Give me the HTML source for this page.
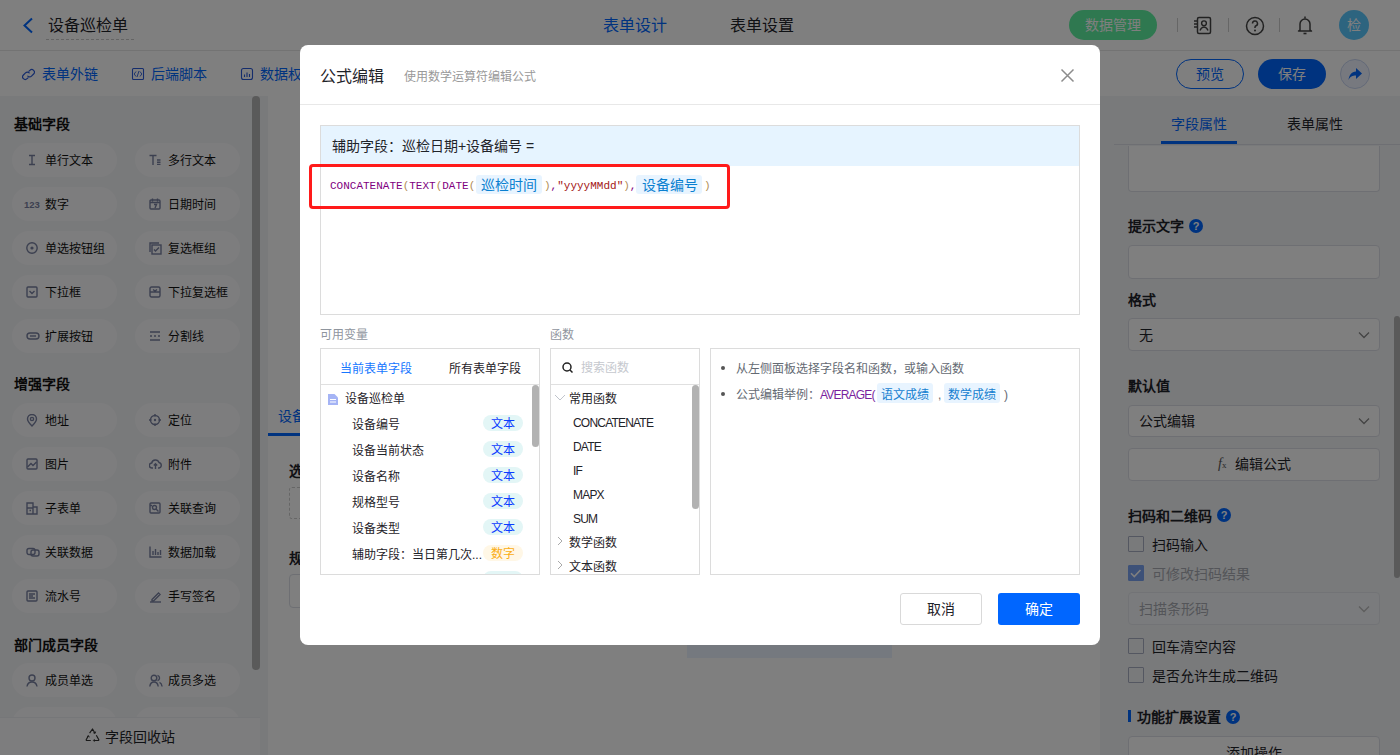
<!DOCTYPE html>
<html lang="zh-CN"><head><meta charset="utf-8">
<style>
*{box-sizing:border-box;margin:0;padding:0}
html,body{width:1400px;height:755px;overflow:hidden;background:#fff;font-family:"Liberation Sans",sans-serif;color:#1f2329}
.a{position:absolute}
.t{position:absolute;white-space:nowrap;line-height:1}
#hdr{left:0;top:0;width:1400px;height:51px;background:#fff;border-bottom:1px solid #e6e6e6}
#tb{left:0;top:51px;width:1400px;height:45px;background:#fff}
#lp{left:0;top:96px;width:268px;height:659px;background:#f3f4f7}
.pill{position:absolute;width:105px;height:34px;border-radius:17px;background:#fbfbfd}
.pill span{position:absolute;left:33px;top:12px;font-size:12px;line-height:12px;color:#111;white-space:nowrap}
.pill svg{position:absolute;left:14px;top:11px}
.pill svg path,.pill svg rect,.pill svg circle{stroke-width:1.4}
.sec{position:absolute;left:14px;font-size:14px;font-weight:bold;color:#111;line-height:14px;white-space:nowrap}
#rp{left:1100px;top:96px;width:300px;height:659px;background:#f3f4f7}
.rl{position:absolute;left:28px;font-size:14px;font-weight:bold;color:#1f2329;line-height:14px;white-space:nowrap}
.inp{position:absolute;left:28px;width:252px;background:#fff;border:1px solid #dcdfe6;border-radius:4px}
.qm{position:absolute;width:14px;height:14px;border-radius:7px;background:#0066ff;color:#fff;font-size:11px;font-weight:bold;line-height:14px;text-align:center}
.cb{position:absolute;left:28px;width:16px;height:16px;border:1px solid #a9aec2;border-radius:1px;background:transparent}
.ct{position:absolute;left:52px;margin-top:-1px;font-size:14px;line-height:14px;color:#1f2329;white-space:nowrap}
.chev{position:absolute}
#ov{left:0;top:0;width:1400px;height:755px;background:rgba(0,0,0,.5)}
#md{left:300px;top:45px;width:800px;height:600px;background:#fff;border-radius:8px}
.mono{font-family:"Liberation Mono",monospace}
.tag{display:inline-block;background:#e8f4ff;color:#1677ff;border-radius:3px}
.vr{position:absolute;left:31px;font-size:12px;line-height:12px;color:#1f2329;white-space:nowrap}
.vt{position:absolute;left:162px;width:40px;height:16px;border-radius:8px;background:#e3f6f6;color:#0a3cff;font-size:12px;line-height:19px;text-align:center}
.fr{position:absolute;left:22px;font-size:12px;line-height:12px;letter-spacing:-0.8px;color:#1f2329;white-space:nowrap}
</style></head><body>
<!-- HEADER -->
<div id="hdr" class="a">
  <svg class="a" style="left:22px;top:17px" width="12" height="17" viewBox="0 0 12 17"><path d="M10 1.5L2.5 8.5L10 15.5" fill="none" stroke="#0066ff" stroke-width="2"/></svg>
  <div class="t" style="left:48px;top:18px;font-size:16px;color:#1f2329">设备巡检单</div>
  <div class="a" style="left:46px;top:39px;width:88px;border-top:1px dashed #c8c8c8"></div>
  <div class="t" style="left:603px;top:18px;font-size:16px;color:#0066ff">表单设计</div>
  <div class="t" style="left:730px;top:18px;font-size:16px;color:#1f2329">表单设置</div>
  <div class="a" style="left:1069px;top:10px;width:88px;height:30px;border-radius:15px;background:#5ef0a0"></div>
  <div class="t" style="left:1085px;top:18px;font-size:14px;color:#fff">数据管理</div>
  <div class="a" style="left:1177px;top:18px;width:1px;height:14px;background:#ccc"></div>
  <div class="a" style="left:1228px;top:18px;width:1px;height:14px;background:#ccc"></div>
  <div class="a" style="left:1279px;top:18px;width:1px;height:14px;background:#ccc"></div>
  <svg class="a" style="left:1193px;top:16px" width="20" height="20" viewBox="0 0 20 20"><rect x="4.5" y="1.5" width="13" height="16" rx="1.5" fill="none" stroke="#444" stroke-width="1.5"/><circle cx="11" cy="7.3" r="2.4" fill="none" stroke="#444" stroke-width="1.4"/><path d="M7 14.5c.8-2.4 2.2-3.4 4-3.4s3.2 1 4 3.4" fill="none" stroke="#444" stroke-width="1.4"/><path d="M1 5h3M1 8h3M1 11h3" stroke="#444" stroke-width="1.3"/></svg>
  <svg class="a" style="left:1245px;top:16px" width="20" height="20" viewBox="0 0 20 20"><circle cx="10" cy="10" r="8.5" fill="none" stroke="#444" stroke-width="1.5"/><path d="M7.5 7.5a2.5 2.5 0 1 1 3.5 2.3c-.7.3-1 .8-1 1.5v.8" fill="none" stroke="#444" stroke-width="1.5"/><circle cx="10" cy="14.5" r="1" fill="#444"/></svg>
  <svg class="a" style="left:1297px;top:15px" width="16" height="20" viewBox="0 0 16 20"><path d="M3 15V9a5 5 0 0 1 10 0v6l1.5 1H1.5z" fill="none" stroke="#444" stroke-width="1.5" stroke-linejoin="round"/><path d="M6.5 18.5h3" stroke="#444" stroke-width="1.6"/><path d="M8 1.5v2" stroke="#444" stroke-width="1.5"/></svg>
  <div class="a" style="left:1339px;top:10px;width:30px;height:30px;border-radius:15px;background:#5ac8ff"></div>
  <div class="t" style="left:1347px;top:18px;font-size:14px;color:#fff">检</div>
</div>
<!-- TOOLBAR -->
<div id="tb" class="a">
  <svg class="a" style="left:22px;top:17px" width="13" height="13" viewBox="0 0 13 13"><path d="M7 3.2l.9-.9a2.6 2.6 0 0 1 3.7 3.7L9.5 8.1a2.6 2.6 0 0 1-3.7 0M6 9.8l-.9.9a2.6 2.6 0 0 1-3.7-3.7L3.5 4.9a2.6 2.6 0 0 1 3.7 0" fill="none" stroke="#2a5ad8" stroke-width="1.2" stroke-linecap="round"/></svg>
  <div class="t" style="left:42px;top:16px;font-size:14px;color:#0066ff">表单外链</div>
  <svg class="a" style="left:131px;top:67px;top:16px" width="14" height="14" viewBox="0 0 14 14"><rect x="1.5" y="1.5" width="11" height="11" rx="1" fill="none" stroke="#2a5ad8" stroke-width="1.1"/><path d="M5 4.5L3.2 7 5 9.5M9 4.5L10.8 7 9 9.5M8 4L6 10" fill="none" stroke="#2a5ad8" stroke-width="0.9"/></svg>
  <div class="t" style="left:151px;top:16px;font-size:14px;color:#0066ff">后端脚本</div>
  <svg class="a" style="left:240px;top:16px" width="14" height="14" viewBox="0 0 14 14"><rect x="1.5" y="1.5" width="11" height="11" rx="2" fill="none" stroke="#2a5ad8" stroke-width="1.1"/><path d="M4.5 10V7.5M7 10V5.5M9.5 10V7" stroke="#2a5ad8" stroke-width="1.1"/></svg>
  <div class="t" style="left:260px;top:16px;font-size:14px;color:#0066ff">数据权限</div>
  <div class="a" style="left:1176px;top:8px;width:68px;height:30px;border-radius:15px;border:1px solid #0066ff"></div>
  <div class="t" style="left:1196px;top:16px;font-size:14px;color:#0066ff">预览</div>
  <div class="a" style="left:1258px;top:8px;width:68px;height:30px;border-radius:15px;background:#0066ff"></div>
  <div class="t" style="left:1278px;top:16px;font-size:14px;color:#fff">保存</div>
  <div class="a" style="left:1340px;top:8px;width:30px;height:30px;border-radius:15px;border:1px solid #c8d4f0;background:#eef3ff"></div>
  <svg class="a" style="left:1347px;top:15px" width="16" height="16" viewBox="0 0 16 16"><path d="M9 2l6 5.5L9 13V9.5C5.5 9.5 3 10.5 1.5 14c.5-5 3-8 7.5-8.5z" fill="#0066ff"/></svg>
</div>
<!-- LEFT PANEL -->
<div id="lp" class="a">
  <div class="sec" style="top:21px">基础字段</div>
  <div class="pill" style="left:12px;top:47px"><svg width="12" height="12" viewBox="0 0 12 12"><path d="M3 1.5h6M6 1.5v9M3 10.5h6" stroke="#7880a0" stroke-width="1.3" fill="none"/></svg><span>单行文本</span></div>
  <div class="pill" style="left:135px;top:47px"><svg width="12" height="12" viewBox="0 0 12 12"><path d="M0.5 1.5h7M4 1.5v9.5" stroke="#7880a0" stroke-width="1.4" fill="none"/><path d="M8 6h3.5M8 8.2h3.5M8 10.4h3.5" stroke="#7880a0" stroke-width="0.9" fill="none"/></svg><span>多行文本</span></div>
  <div class="pill" style="left:12px;top:91px"><svg width="16" height="12" viewBox="0 0 16 12" style="left:12px"><text x="0" y="9.5" style="font:bold 9.5px 'Liberation Sans'" fill="#7880a0">123</text></svg><span>数字</span></div>
  <div class="pill" style="left:135px;top:91px"><svg width="12" height="12" viewBox="0 0 12 12"><rect x="1" y="2" width="10" height="9" rx="1" fill="none" stroke="#7880a0" stroke-width="1.2"/><path d="M1 4.5h10M3.5 0.5v3M8.5 0.5v3M5 6.5h2.5L6 10" stroke="#7880a0" stroke-width="1" fill="none"/></svg><span>日期时间</span></div>
  <div class="pill" style="left:12px;top:135px"><svg width="12" height="12" viewBox="0 0 12 12"><circle cx="6" cy="6" r="5.2" fill="none" stroke="#7880a0" stroke-width="1.2"/><circle cx="6" cy="6" r="1.6" fill="#7880a0"/></svg><span>单选按钮组</span></div>
  <div class="pill" style="left:135px;top:135px"><svg width="13" height="13" viewBox="0 0 13 13"><path d="M1 10V1h9" fill="none" stroke="#7880a0" stroke-width="1.1"/><rect x="3" y="3" width="9" height="9" fill="none" stroke="#7880a0" stroke-width="1.2"/><path d="M5 7.5l1.5 1.5L10 5.5" fill="none" stroke="#7880a0" stroke-width="1.1"/></svg><span>复选框组</span></div>
  <div class="pill" style="left:12px;top:179px"><svg width="12" height="12" viewBox="0 0 12 12"><rect x="1" y="1" width="10" height="10" rx="1" fill="none" stroke="#7880a0" stroke-width="1.2"/><path d="M3.5 5l2.5 2.5L8.5 5" fill="none" stroke="#7880a0" stroke-width="1.1"/></svg><span>下拉框</span></div>
  <div class="pill" style="left:135px;top:179px"><svg width="12" height="12" viewBox="0 0 12 12"><rect x="1" y="1" width="10" height="10" rx="1.5" fill="none" stroke="#7880a0" stroke-width="1.2"/><path d="M1 6h10M4 3.5l2 1.5 2-1.5" fill="none" stroke="#7880a0" stroke-width="1.1"/></svg><span>下拉复选框</span></div>
  <div class="pill" style="left:12px;top:223px"><svg width="14" height="12" viewBox="0 0 14 12"><rect x="1" y="3" width="12" height="6" rx="3" fill="none" stroke="#7880a0" stroke-width="1.3"/><path d="M4 6h6" stroke="#7880a0" stroke-width="1.1"/></svg><span>扩展按钮</span></div>
  <div class="pill" style="left:135px;top:223px"><svg width="12" height="12" viewBox="0 0 12 12"><path d="M1 2h10M1 6h2M5 6h2M9 6h2M1 10h10" stroke="#7880a0" stroke-width="1.2"/></svg><span>分割线</span></div>
  <div class="sec" style="top:281px">增强字段</div>
  <div class="pill" style="left:12px;top:307px"><svg width="12" height="13" viewBox="0 0 12 13"><path d="M6 12S1.5 7.5 1.5 5a4.5 4.5 0 0 1 9 0C10.5 7.5 6 12 6 12z" fill="none" stroke="#7880a0" stroke-width="1.2"/><circle cx="6" cy="5" r="1.6" fill="none" stroke="#7880a0" stroke-width="1.1"/></svg><span>地址</span></div>
  <div class="pill" style="left:135px;top:307px"><svg width="12" height="12" viewBox="0 0 12 12"><circle cx="6" cy="6" r="4.5" fill="none" stroke="#7880a0" stroke-width="1.2"/><circle cx="6" cy="6" r="1.2" fill="#7880a0"/><path d="M6 0v2.5M6 9.5V12M0 6h2.5M9.5 6H12" stroke="#7880a0" stroke-width="1.2"/></svg><span>定位</span></div>
  <div class="pill" style="left:12px;top:351px"><svg width="12" height="12" viewBox="0 0 12 12"><rect x="1" y="1" width="10" height="10" rx="1" fill="none" stroke="#7880a0" stroke-width="1.2"/><path d="M1.5 9L5 5.5 7 7.5l3.5-3.5" fill="none" stroke="#7880a0" stroke-width="1.1"/></svg><span>图片</span></div>
  <div class="pill" style="left:135px;top:351px"><svg width="13" height="12" viewBox="0 0 13 12"><path d="M4 10H3a2.5 2.5 0 0 1-.3-5A3.8 3.8 0 0 1 10 4.5a2.8 2.8 0 0 1 0 5.5H9" fill="none" stroke="#7880a0" stroke-width="1.2"/><path d="M6.5 11V6M4.8 7.5l1.7-1.7 1.7 1.7" fill="none" stroke="#7880a0" stroke-width="1.1"/></svg><span>附件</span></div>
  <div class="pill" style="left:12px;top:395px"><svg width="12" height="13" viewBox="0 0 12 13"><path d="M1 1h6v11H1zM7 5h4v7H7M1 6h6M3.5 8.5h1.5" fill="none" stroke="#7880a0" stroke-width="1.2"/></svg><span>子表单</span></div>
  <div class="pill" style="left:135px;top:395px"><svg width="12" height="12" viewBox="0 0 12 12"><rect x="1" y="1" width="10" height="10" rx="1" fill="none" stroke="#7880a0" stroke-width="1.2"/><circle cx="5.5" cy="5.5" r="2" fill="none" stroke="#7880a0" stroke-width="1.1"/><path d="M7 7l2.5 2.5M1 3.5h2" stroke="#7880a0" stroke-width="1.1"/></svg><span>关联查询</span></div>
  <div class="pill" style="left:12px;top:439px"><svg width="14" height="12" viewBox="0 0 14 12"><rect x="1" y="2.5" width="8" height="6" rx="2" fill="none" stroke="#7880a0" stroke-width="1.2"/><rect x="5" y="4" width="8" height="6" rx="2" fill="none" stroke="#7880a0" stroke-width="1.2"/></svg><span>关联数据</span></div>
  <div class="pill" style="left:135px;top:439px"><svg width="13" height="12" viewBox="0 0 13 12"><path d="M1 0.5V11h11.5M4 9V5M6.5 9V3M9 9V6M11.5 9V4" fill="none" stroke="#7880a0" stroke-width="1.2"/></svg><span>数据加载</span></div>
  <div class="pill" style="left:12px;top:483px"><svg width="12" height="12" viewBox="0 0 12 12"><rect x="1" y="1" width="10" height="10" rx="1" fill="none" stroke="#7880a0" stroke-width="1.2"/><path d="M3 4h6M3 6h4M3 8h6" stroke="#7880a0" stroke-width="1.1"/></svg><span>流水号</span></div>
  <div class="pill" style="left:135px;top:483px"><svg width="13" height="13" viewBox="0 0 13 13"><path d="M3 9.5l6.5-6.5 1.5 1.5L4.5 11H3z" fill="none" stroke="#7880a0" stroke-width="1.2"/><path d="M1 12h11" stroke="#7880a0" stroke-width="1.2"/></svg><span>手写签名</span></div>
  <div class="sec" style="top:542px">部门成员字段</div>
  <div class="pill" style="left:12px;top:567px"><svg width="12" height="13" viewBox="0 0 12 13"><circle cx="6" cy="4" r="3" fill="none" stroke="#7880a0" stroke-width="1.2"/><path d="M1 12.5c.5-3 2.5-4.5 5-4.5s4.5 1.5 5 4.5" fill="none" stroke="#7880a0" stroke-width="1.2"/></svg><span>成员单选</span></div>
  <div class="pill" style="left:135px;top:567px"><svg width="14" height="13" viewBox="0 0 14 13"><circle cx="5" cy="4" r="2.8" fill="none" stroke="#7880a0" stroke-width="1.2"/><path d="M0.8 12.5c.4-3 2-4.5 4.2-4.5s3.8 1.5 4.2 4.5M8.5 1.3a2.8 2.8 0 0 1 0 5.4M10.5 8.3c1.5.7 2.3 2 2.6 4.2" fill="none" stroke="#7880a0" stroke-width="1.2"/></svg><span>成员多选</span></div>
  <div class="pill" style="left:12px;top:611px"></div>
  <div class="pill" style="left:135px;top:611px"></div>
  <div class="a" style="left:252px;top:0;width:8px;height:574px;border-radius:4px;background:#b4b4b4"></div>
  <div class="a" style="left:0;top:621px;width:260px;height:38px;background:#fbfbfc;border-top:1px solid #eceef2"></div>
  <svg class="a" style="left:85px;top:632px" width="15" height="14" viewBox="0 0 15 14"><path d="M4.6 5.2L7.5 1l2.4 4M11.3 7.2l2.4 4.3c.3.6 0 1-.6 1H9M5.8 12.5H1.9c-.6 0-.9-.4-.6-1L3.4 7.8" fill="none" stroke="#333" stroke-width="1.2" stroke-linejoin="round"/><path d="M8.3 4.8l1.8.6.5-1.8M9.6 11.2l-1.3 1.3 1.3 1.2M2.2 8.6l1.3-.9.8 1.6" fill="none" stroke="#333" stroke-width="1"/></svg>
  <div class="t" style="left:105px;top:634px;font-size:14px;color:#1f2329">字段回收站</div>
</div>
<!-- CANVAS -->
<div class="a" style="left:268px;top:96px;width:832px;height:659px;background:#fff">
  <div class="t" style="left:10px;top:313px;font-size:14px;color:#0066ff">设备巡检单</div>
  <div class="a" style="left:0;top:337px;width:120px;height:3px;background:#0066ff"></div>
  <div class="t" style="left:21px;top:368px;font-size:14px;font-weight:bold;color:#1f2329">选择设备</div>
  <div class="a" style="left:21px;top:391px;width:300px;height:32px;border:1px dashed #ccc;border-radius:3px"></div>
  <div class="t" style="left:21px;top:455px;font-size:14px;font-weight:bold;color:#1f2329">规格型号</div>
  <div class="a" style="left:21px;top:478px;width:300px;height:34px;border:1px solid #dcdfe6;border-radius:4px"></div>
  <div class="a" style="left:419px;top:540px;width:205px;height:22px;background:#ebf3ff"></div>
</div>
<!-- RIGHT PANEL -->
<div id="rp" class="a">
  <div class="a" style="left:14px;top:48px;width:286px;height:1px;background:#dcdfe6"></div>
  <div class="t" style="left:71px;top:21px;font-size:14px;color:#0066ff">字段属性</div>
  <div class="t" style="left:187px;top:21px;font-size:14px;color:#1f2329">表单属性</div>
  <div class="a" style="left:61px;top:45px;width:76px;height:3px;background:#0066ff"></div>
  <div class="inp" style="top:50px;height:46px;border-top:none;border-radius:0 0 4px 4px"></div>
  <div class="rl" style="top:123px">提示文字</div><div class="qm" style="left:89px;top:123px">?</div>
  <div class="inp" style="top:149px;height:34px"></div>
  <div class="rl" style="top:197px">格式</div>
  <div class="inp" style="top:222px;height:33px"></div>
  <div class="t" style="left:39px;top:232px;font-size:14px;color:#1f2329">无</div>
  <svg class="chev" style="left:258px;top:235px" width="12" height="8" viewBox="0 0 12 8"><path d="M1 1.5l5 5 5-5" fill="none" stroke="#888" stroke-width="1.3"/></svg>
  <div class="rl" style="top:283px">默认值</div>
  <div class="inp" style="top:309px;height:32px"></div>
  <div class="t" style="left:39px;top:318px;font-size:14px;color:#1f2329">公式编辑</div>
  <svg class="chev" style="left:258px;top:321px" width="12" height="8" viewBox="0 0 12 8"><path d="M1 1.5l5 5 5-5" fill="none" stroke="#888" stroke-width="1.3"/></svg>
  <div class="inp" style="top:352px;height:33px"></div>
  <div class="t" style="left:118px;top:361px;font-size:14px;font-style:italic;color:#555;font-family:'Liberation Serif',serif">f<span style="font-size:9px;font-style:normal">x</span></div>
  <div class="t" style="left:135px;top:361px;font-size:14px;color:#1f2329">编辑公式</div>
  <div class="rl" style="top:413px">扫码和二维码</div><div class="qm" style="left:117px;top:412px">?</div>
  <div class="cb" style="top:440px"></div><div class="ct" style="top:443px">扫码输入</div>
  <div class="cb" style="top:469px;background:#7aa2f0;border-color:#7aa2f0"><svg width="14" height="14" viewBox="0 0 14 14" style="position:absolute;left:0;top:0"><path d="M2 7.2l3.3 3.3L11.5 4" fill="none" stroke="#fff" stroke-width="1.6"/></svg></div><div class="ct" style="top:472px;color:#a8abb2">可修改扫码结果</div>
  <div class="inp" style="top:496px;height:33px;background:#f5f7fa;border-color:#e4e7ed"></div>
  <div class="t" style="left:39px;top:506px;font-size:14px;color:#a8abb2">扫描条形码</div>
  <svg class="chev" style="left:258px;top:509px" width="12" height="8" viewBox="0 0 12 8"><path d="M1 1.5l5 5 5-5" fill="none" stroke="#bbb" stroke-width="1.3"/></svg>
  <div class="cb" style="top:542px"></div><div class="ct" style="top:545px">回车清空内容</div>
  <div class="cb" style="top:571px"></div><div class="ct" style="top:574px">是否允许生成二维码</div>
  <div class="a" style="left:28px;top:614px;width:3px;height:12px;background:#0066ff"></div>
  <div class="rl" style="left:37px;top:614px">功能扩展设置</div><div class="qm" style="left:126px;top:614px">?</div>
  <div class="inp" style="top:640px;height:34px"></div>
  <div class="t" style="left:126px;top:650px;font-size:14px;color:#1f2329">添加操作</div>
  <div class="a" style="left:294px;top:220px;width:6px;height:262px;border-radius:3px;background:#b4b4b4"></div>
</div>
<div id="ov" class="a"></div>
<!-- MODAL -->
<div id="md" class="a">
  <div class="t" style="left:20px;top:24px;font-size:16px;color:#1f2329">公式编辑</div>
  <div class="t" style="left:104px;top:26px;font-size:12px;color:#999">使用数学运算符编辑公式</div>
  <svg class="a" style="left:760px;top:23px" width="15" height="15" viewBox="0 0 15 15"><path d="M1.5 1.5l12 12M13.5 1.5l-12 12" stroke="#8c8c8c" stroke-width="1.5"/></svg>
  <div class="a" style="left:0;top:59px;width:800px;height:1px;background:#e8e8e8"></div>
  <!-- formula box -->
  <div class="a" style="left:20px;top:80px;width:760px;height:190px;border:1px solid #dcdcdc">
    <div class="a" style="left:0;top:0;width:758px;height:40px;background:#e6f4ff"></div>
    <div class="t" style="left:11px;top:13px;font-size:14px;color:#1f2329">辅助字段：巡检日期+设备编号 =</div>
  </div>
  <div class="a" style="left:9px;top:119px;width:421px;height:45px;border:3px solid #ff1a1a;border-radius:4px"></div>
  <div class="t mono" style="left:30px;top:136px;font-size:11px;color:#800080">CONCATENATE<span style="color:#b08d57">(</span>TEXT<span style="color:#b08d57">(</span>DATE<span style="color:#b08d57">(</span></div>
  <div class="a" style="left:176px;top:130px;width:66px;height:19px;background:#e8f4ff;border-radius:3px"></div>
  <div class="t" style="left:181px;top:133px;font-size:14px;color:#0a80d0">巡检时间</div>
  <div class="t mono" style="left:244px;top:136px;font-size:11px;color:#800080"><span style="color:#b08d57">)</span>,<span style="color:#a31515">"yyyyMMdd"</span><span style="color:#b08d57">)</span>,</div>
  <div class="a" style="left:336px;top:130px;width:66px;height:19px;background:#e8f4ff;border-radius:3px"></div>
  <div class="t" style="left:342px;top:133px;font-size:14px;color:#0a80d0">设备编号</div>
  <div class="t mono" style="left:404px;top:136px;font-size:11px;color:#b08d57">)</div>
  <!-- lower -->
  <div class="t" style="left:20px;top:284px;font-size:12px;color:#8f959e">可用变量</div>
  <div class="t" style="left:250px;top:284px;font-size:12px;color:#8f959e">函数</div>
  <div class="a" style="left:20px;top:303px;width:220px;height:227px;border:1px solid #dcdcdc;overflow:hidden">
    <div class="t" style="left:19px;top:14px;font-size:12px;color:#1677ff">当前表单字段</div>
    <div class="t" style="left:128px;top:14px;font-size:12px;color:#1f2329">所有表单字段</div>
    <div class="a" style="left:0;top:35px;width:220px;height:1px;background:#e0e0e0"></div>
    <svg class="a" style="left:7px;top:45px" width="10" height="11" viewBox="0 0 10 11"><path d="M0 0h6.5L10 3.5V11H0z" fill="#a5b4f5"/><path d="M2 5.5h6M2 8h6" stroke="#fff" stroke-width="1"/></svg>
    <div class="t" style="left:24px;top:44px;font-size:12px;color:#1f2329">设备巡检单</div>
    <div class="vr" style="top:70px">设备编号</div><div class="vt" style="top:66px">文本</div>
    <div class="vr" style="top:96px">设备当前状态</div><div class="vt" style="top:92px">文本</div>
    <div class="vr" style="top:122px">设备名称</div><div class="vt" style="top:118px">文本</div>
    <div class="vr" style="top:148px">规格型号</div><div class="vt" style="top:144px">文本</div>
    <div class="vr" style="top:174px">设备类型</div><div class="vt" style="top:170px">文本</div>
    <div class="vr" style="top:200px">辅助字段：当日第几次...</div><div class="vt" style="top:196px;background:#fff7e6;color:#faad14">数字</div>
    <div class="vt" style="top:222px"></div>
    <div class="a" style="left:211px;top:36px;width:7px;height:62px;border-radius:4px;background:#b2b2b2"></div>
  </div>
  <div class="a" style="left:250px;top:303px;width:150px;height:227px;border:1px solid #dcdcdc;overflow:hidden">
    <svg class="a" style="left:11px;top:13px" width="11" height="11" viewBox="0 0 11 11"><circle cx="5" cy="5" r="4" fill="none" stroke="#222" stroke-width="1.5"/><path d="M8 8l2.5 2.5" stroke="#222" stroke-width="1.5"/></svg>
    <div class="t" style="left:30px;top:13px;font-size:12px;color:#c5c8ce">搜索函数</div>
    <div class="a" style="left:0;top:35px;width:150px;height:1px;background:#e0e0e0"></div>
    <svg class="a" style="left:3px;top:45px" width="12" height="8" viewBox="0 0 12 8"><path d="M1 1l5 5 5-5" fill="none" stroke="#c0c4cc" stroke-width="1"/></svg>
    <div class="t" style="left:18px;top:44px;font-size:12px;color:#1f2329">常用函数</div>
    <div class="fr" style="top:68px">CONCATENATE</div>
    <div class="fr" style="top:92px">DATE</div>
    <div class="fr" style="top:116px">IF</div>
    <div class="fr" style="top:140px">MAPX</div>
    <div class="fr" style="top:164px">SUM</div>
    <svg class="a" style="left:6px;top:187px" width="6" height="10" viewBox="0 0 6 10"><path d="M1 1l4 4-4 4" fill="none" stroke="#aaa" stroke-width="1"/></svg>
    <div class="t" style="left:18px;top:188px;font-size:12px;color:#1f2329">数学函数</div>
    <svg class="a" style="left:6px;top:211px" width="6" height="10" viewBox="0 0 6 10"><path d="M1 1l4 4-4 4" fill="none" stroke="#aaa" stroke-width="1"/></svg>
    <div class="t" style="left:18px;top:212px;font-size:12px;color:#1f2329">文本函数</div>
    <div class="a" style="left:141px;top:36px;width:7px;height:124px;border-radius:4px;background:#b2b2b2"></div>
  </div>
  <div class="a" style="left:410px;top:303px;width:370px;height:227px;border:1px solid #dcdcdc">
    <div class="a" style="left:10px;top:17px;width:4px;height:4px;border-radius:2px;background:#555"></div>
    <div class="t" style="left:25px;top:14px;font-size:12px;color:#646a73">从左侧面板选择字段名和函数，或输入函数</div>
    <div class="a" style="left:10px;top:43px;width:4px;height:4px;border-radius:2px;background:#555"></div>
    <div class="t" style="left:25px;top:40px;font-size:12px;color:#646a73">公式编辑举例：<span style="color:#7a1f9e;letter-spacing:-0.8px">AVERAGE(</span></div>
    <div class="a" style="left:166px;top:34px;width:56px;height:20px;background:#e8f4ff;border-radius:3px"></div>
    <div class="t" style="left:170px;top:40px;font-size:12px;color:#1580d0">语文成绩</div>
    <div class="t" style="left:227px;top:40px;font-size:12px;color:#646a73">,</div>
    <div class="a" style="left:233px;top:34px;width:56px;height:20px;background:#e8f4ff;border-radius:3px"></div>
    <div class="t" style="left:237px;top:40px;font-size:12px;color:#1580d0">数学成绩</div>
    <div class="t" style="left:293px;top:40px;font-size:12px;color:#646a73">)</div>
  </div>
  <div class="a" style="left:600px;top:548px;width:82px;height:32px;border:1px solid #d9d9d9;border-radius:3px"></div>
  <div class="t" style="left:627px;top:557px;font-size:14px;color:#1f2329">取消</div>
  <div class="a" style="left:698px;top:548px;width:82px;height:32px;background:#0066ff;border-radius:3px"></div>
  <div class="t" style="left:725px;top:557px;font-size:14px;font-weight:500;color:#fff">确定</div>
</div>
</body></html>
